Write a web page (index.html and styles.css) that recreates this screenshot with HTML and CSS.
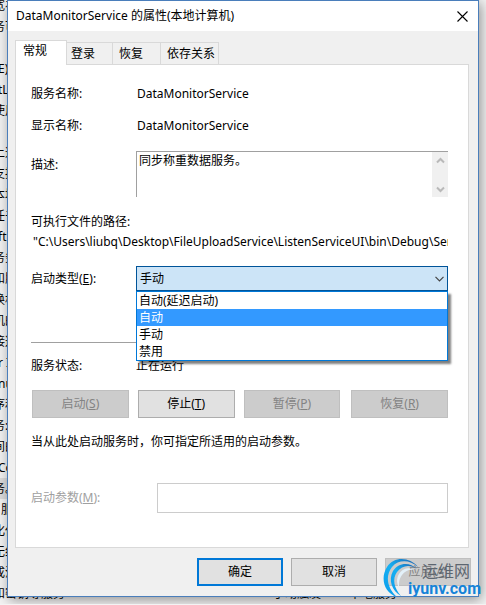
FILE: index.html
```html
<!DOCTYPE html>
<html lang="zh-CN">
<head>
  <meta charset="UTF-8">
  <meta name="viewport" content="width=device-width, initial-scale=1.0">
  <title>DataMonitorService 的属性(本地计算机)</title>
  <link rel="stylesheet" href="styles.css">
</head>
<body>
  <!-- services list behind the dialog -->
  <ul class="backdrop" aria-hidden="true">
    <li>宽衤</li>
    <li>务可</li>
    <li></li>
    <li class="in">E)</li>
    <li class="in">tL</li>
    <li>使用</li>
    <li></li>
    <li>上述</li>
    <li>支持</li>
    <li>本地</li>
    <li>任书</li>
    <li class="in">ft</li>
    <li>务务</li>
    <li>和服</li>
    <li>换机</li>
    <li>机的</li>
    <li>接这</li>
    <li class="in">r I</li>
    <li class="in">nu</li>
    <li>序和</li>
    <li>务:</li>
    <li>间的</li>
    <li class="in">Co</li>
    <li class="selected">务。</li>
    <li class="in">&nbsp;服</li>
    <li>化任</li>
    <li>无组</li>
    <li>成沪</li>
    <li class="last"><span>和密钥等服务</span><span>手动触发</span><span>本地服务</span></li>
  </ul>

  <main class="dialog">
    <header class="titlebar">
      <h1>DataMonitorService 的属性(本地计算机)</h1>
      <button class="close" aria-label="关闭">
        <svg width="11" height="11" viewBox="0 0 11 11"><path d="M.5.5l10 10M10.5.5l-10 10" stroke="#000" stroke-width="1.1"/></svg>
      </button>
    </header>

    <div class="tabs" role="tablist">
      <button class="tab active" role="tab" aria-selected="true">常规</button>
      <button class="tab first" role="tab">登录</button>
      <button class="tab" role="tab">恢复</button>
      <button class="tab wide" role="tab">依存关系</button>
    </div>

    <section class="panel">
      <div class="row name">
        <span>服务名称:</span>
        <span class="value">DataMonitorService</span>
      </div>
      <div class="row name">
        <span>显示名称:</span>
        <span class="value">DataMonitorService</span>
      </div>
      <div class="row desc">
        <label for="desc">描述:</label>
        <div class="desc-box">
          <textarea id="desc" readonly>同步称重数据服务。</textarea>
          <div class="scroll">
            <svg width="9" height="7" viewBox="0 0 9 7"><path d="M1 5.5l3.5-3.5L8 5.5" fill="none" stroke="#b9b9b9" stroke-width="2"/></svg>
            <svg width="9" height="7" viewBox="0 0 9 7"><path d="M1 1.500l3.500 3.500L8 1.500" fill="none" stroke="#b9b9b9" stroke-width="2"/></svg>
          </div>
        </div>
      </div>
      <div class="path">
        <label for="path">可执行文件的路径:</label>
        <input id="path" type="text" readonly value='"C:\Users\liubq\Desktop\FileUploadService\ListenServiceUI\bin\Debug\ServiceHost.exe"'>
      </div>
      <div class="row type">
        <label for="type">启动类型(<u>E</u>):</label>
        <div class="combo">
          <select id="type">
            <option>自动(延迟启动)</option>
            <option>自动</option>
            <option selected>手动</option>
            <option>禁用</option>
          </select>
          <svg class="arrow" width="9" height="6" viewBox="0 0 9 6"><path d="M.5.8l4 4 4-4" fill="none" stroke="#444" stroke-width="1.2"/></svg>
          <ul class="menu" role="listbox">
            <li role="option">自动(延迟启动)</li>
            <li role="option" class="hover">自动</li>
            <li role="option">手动</li>
            <li role="option">禁用</li>
          </ul>
        </div>
      </div>
      <hr>
      <div class="row status">
        <span>服务状态:</span>
        <span>正在运行</span>
      </div>
      <div class="actions">
        <button class="btn" disabled>启动(<u>S</u>)</button>
        <button class="btn">停止(<u>T</u>)</button>
        <button class="btn" disabled>暂停(<u>P</u>)</button>
        <button class="btn" disabled>恢复(<u>R</u>)</button>
      </div>
      <p class="hint">当从此处启动服务时，你可指定所适用的启动参数。</p>
      <div class="params">
        <label for="params">启动参数(<u>M</u>):</label>
        <input id="params" type="text" disabled>
      </div>
    </section>

    <footer class="footer">
      <button class="btn default">确定</button>
      <button class="btn">取消</button>
      <button class="btn" disabled>应用(<u>A</u>)</button>
    </footer>
  </main>

  <div class="watermark">
    <svg class="swirl" width="38" height="40" viewBox="0 0 38 40">
      <defs>
        <linearGradient id="ring" x1="0" y1="1" x2="1" y2="0">
          <stop offset="0" stop-color="#0a9bea"/>
          <stop offset=".5" stop-color="#16b0f2"/>
          <stop offset="1" stop-color="#1d5fae"/>
        </linearGradient>
      </defs>
      <path d="M35 9C27-1 11-2 4 9-3 20 1 35 14 39 4 30 2 18 9 9 16 1 27 2 35 9z" fill="url(#ring)"/>
      <path d="M34 11C26 3 15 5 10 13 5 22 9 33 18 38 11 30 9 21 14 14 19 7 27 6 34 11z" fill="url(#ring)"/>
      <path d="M31 12c-7-4-12-1-15 4-3 5-2 10 0 14 0-6 0-9 3-13 3-4 7-6 12-5z" fill="#e3f1f9"/>
    </svg>
    <span class="mark-cn">运维网</span>
    <span class="mark-en">iyunv.com</span>
  </div>
</body>
</html>
```
FILE: styles.css
```css
* {
  box-sizing: border-box;
}
body {
  margin: 0;
  position: relative;
  overflow: hidden;
  background-color: #f3f3f3;
  color: #000;
  font: 12px/16px "Noto Sans", "Noto Sans CJK SC", sans-serif;
}
button,
input,
select,
textarea {
  font: inherit;
  color: inherit;
}
ul {
  list-style: none;
  margin: 0;
  padding: 0;
}

/* window behind */
.backdrop {
  position: absolute;
  top: -5px;
  left: 0;
  right: 0;
  z-index: -1;
}
.backdrop li {
  height: 21px;
  line-height: 21px;
  text-indent: -7px;
  white-space: nowrap;
}
.backdrop .in {
  text-indent: -2px;
}
.backdrop .selected {
  width: 50%;
  background-color: #dcdcdc;
}
.backdrop .last {
  display: grid;
  grid-template-columns: 280px 76px 1fr;
}

/* dialog */
.dialog {
  margin: 0 7px 7px;
  border: 1px solid #4a7ebb;
  background-color: #f0f0f0;
  box-shadow: 2px 3px 12px rgba(0, 0, 0, 0.4);
}
.titlebar {
  display: flex;
  justify-content: space-between;
  align-items: center;
  height: 30px;
  padding: 0 10px 0 8px;
  background-color: #fff;
}
.titlebar h1 {
  margin: 0;
  font-size: 12px;
  font-weight: normal;
}
.close {
  display: flex;
  padding: 0;
  border: none;
  background: none;
}
.tabs {
  display: flex;
  align-items: flex-end;
  height: 33px;
  padding-left: 7px;
}
.tab {
  width: 48px;
  height: 22px;
  padding: 0 0 0 6px;
  border: 1px solid #d9d9d9;
  border-width: 1px 1px 0 0;
  background-color: #f0f0f0;
  text-align: left;
}
.tab.first {
  width: 46px;
  padding-left: 4px;
}
.tab.active {
  width: 52px;
  height: 25px;
  margin-bottom: -1px;
  padding: 0 0 4px 7px;
  border-left-width: 1px;
  background-color: #fff;
  position: relative;
}
.tab.wide {
  width: 58px;
}
.panel {
  margin: 0 9px 0 7px;
  padding: 21px 20px 34px 15px;
  border: 1px solid #d9d9d9;
  background-color: #fff;
}
.row {
  display: grid;
  grid-template-columns: 105px 1fr;
}
.row.name {
  margin-bottom: 16px;
}
.value {
  padding-left: 1px;
}
.desc {
  align-items: start;
  margin-top: 17px;
}
.desc label {
  padding-top: 6px;
}
.desc-box {
  display: flex;
  height: 46px;
  border: 1px solid #a0a0a0;
  border-width: 1px 0 0 1px;
}
.desc-box textarea {
  flex: 1;
  min-width: 0;
  padding: 1px 2px;
  border: none;
  resize: none;
  outline: none;
}
.scroll {
  display: flex;
  flex-direction: column;
  justify-content: space-between;
  align-items: center;
  width: 16px;
  padding: 5px 0 4px;
  background-color: #f0f0f0;
}
.path {
  margin-top: 17px;
}
.path label,
.path input {
  display: block;
}
.path input {
  width: 100%;
  height: 16px;
  margin-top: 4px;
  padding: 0 0 0 2px;
  border: none;
}
.type {
  align-items: center;
  margin-top: 16px;
}
.combo {
  display: grid;
  align-items: center;
  position: relative;
}
.combo select {
  appearance: none;
  width: 100%;
  height: 25px;
  padding: 0 20px 0 3px;
  border: 1px solid #005499;
  border-radius: 0;
  background-color: #cce4f7;
}
.arrow {
  position: absolute;
  right: 4px;
}
.menu {
  position: absolute;
  top: 25px;
  left: 0;
  right: 0;
  border: 1px solid #0078d7;
  background-color: #fff;
  box-shadow: 3px 3px 2px rgba(0, 0, 0, 0.5);
}
.menu li {
  height: 17px;
  line-height: 17px;
  padding-left: 2px;
}
.menu .hover {
  background-color: #3399ff;
  color: #fff;
}
hr {
  margin: 51px 0 15px;
  border: none;
  border-top: 1px solid #a0a0a0;
}
.actions {
  display: flex;
  gap: 9px;
  margin: 16px 0 0 1px;
}
.actions .btn {
  flex: 1;
}
.actions .btn:last-child {
  margin-left: 2px;
}
.btn {
  height: 28px;
  padding: 0;
  border: 1px solid #adadad;
  background-color: #e1e1e1;
}
.btn:disabled {
  border-color: #bfbfbf;
  background-color: #ccc;
  color: #838383;
}
.btn.default {
  border: 2px solid #0078d7;
}
.hint {
  margin: 16px 0 33px;
}
.params {
  display: grid;
  grid-template-columns: 126px 1fr;
  align-items: center;
  color: #a0a0a0;
}
.params input {
  width: 100%;
  height: 30px;
  border: 1px solid #ccc;
  background-color: #fff;
}
.footer {
  display: flex;
  justify-content: flex-end;
  gap: 8px;
  padding: 10px 7px;
}
.footer .btn {
  width: 86px;
}

/* site mark over the corner */
.watermark {
  position: absolute;
  right: 5px;
  bottom: 6px;
  width: 98px;
  height: 40px;
}
.swirl {
  position: absolute;
  left: 0;
  top: 0;
}
.mark-cn,
.mark-en {
  position: absolute;
  right: 0;
  white-space: nowrap;
}
.mark-cn {
  top: 5px;
  right: 11px;
  color: #5d6670;
  font-size: 16px;
}
.mark-en {
  top: 21px;
  color: #1583d8;
  font: bold 16px/20px Roboto, sans-serif;
}
```
